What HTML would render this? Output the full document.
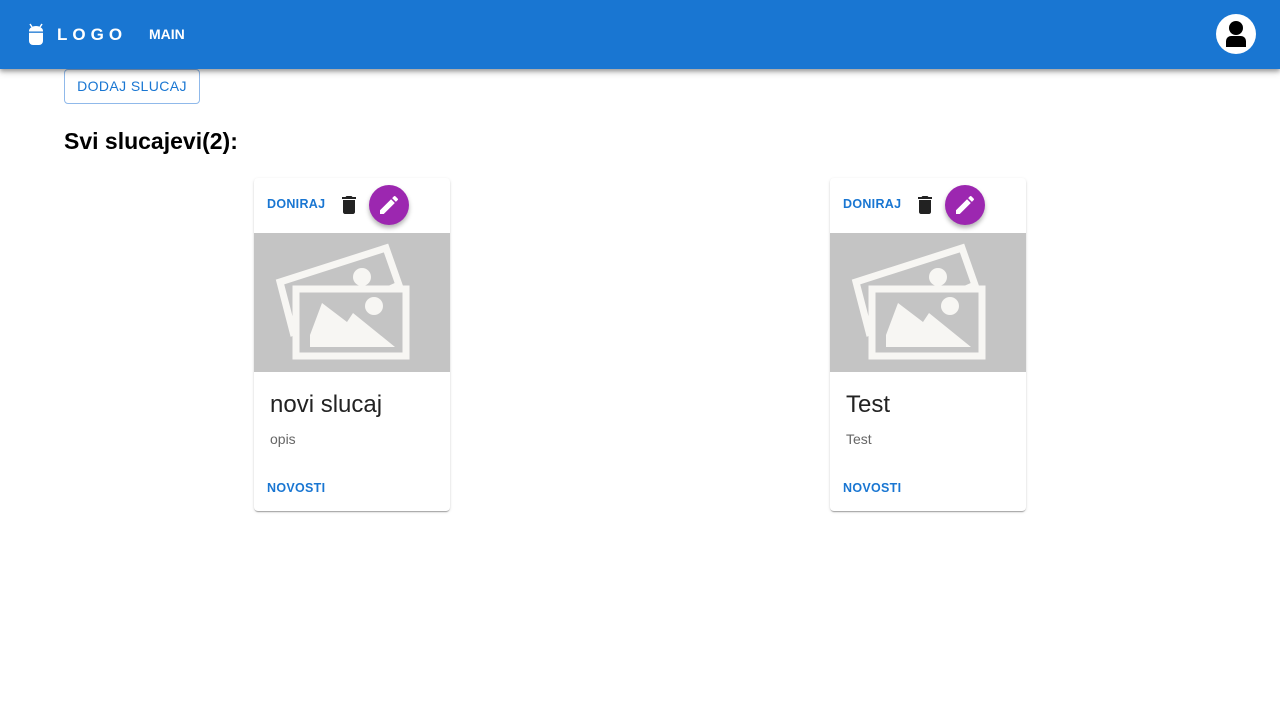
<!DOCTYPE html>
<html><head><style>
*{box-sizing:border-box;margin:0;padding:0}
body{width:1280px;height:720px;background:#fff;font-family:"Liberation Sans",sans-serif;position:relative;overflow:hidden}
.bar{position:absolute;left:0;top:0;width:1280px;height:69px;background:#1976d2;box-shadow:0 2px 4px rgba(0,0,0,.3),0 4px 6px rgba(0,0,0,.15);z-index:2}
.logo{position:absolute;left:57px;top:25px;color:#fff;font-weight:bold;font-size:17px;letter-spacing:5px}
.main{position:absolute;left:149px;top:26px;color:#fff;font-weight:bold;font-size:14px}
.av{position:absolute;left:1216px;top:14px;width:40px;height:40px;border-radius:50%;background:#fff}
.btn{position:absolute;left:64px;top:69px;width:136px;height:35px;border:1px solid #90b9ea;border-radius:4px;color:#1976d2;font-size:14px;text-align:center;line-height:33px;letter-spacing:.4px}
h2{position:absolute;left:64px;top:128px;font-size:23px;font-weight:bold;color:#000}
.card{position:absolute;top:178px;width:196px;height:333px;background:#fff;border-radius:4px;box-shadow:0 2px 1px -1px rgba(0,0,0,.2),0 1px 1px rgba(0,0,0,.14),0 1px 3px rgba(0,0,0,.12)}
.don{position:absolute;left:13px;top:19px;color:#1976d2;font-size:12.5px;font-weight:bold;letter-spacing:.3px}
.fab{position:absolute;left:115px;top:7px;width:40px;height:40px;border-radius:50%;background:#9c27b0;box-shadow:0 3px 5px rgba(0,0,0,.3)}
.img{position:absolute;left:0;top:55px;width:196px;height:139px;background:#c4c4c4}
.t{position:absolute;left:16px;top:213px;font-size:24px;color:#222}
.d{position:absolute;left:16px;top:253px;font-size:14px;color:#666}
.nov{position:absolute;left:13px;top:303px;color:#1976d2;font-size:12.5px;font-weight:bold;letter-spacing:.3px}
</style></head><body>
<div class="bar">
<svg style="position:absolute;left:27px;top:23px" width="18" height="23" viewBox="0 0 18 23"><path d="M3 1l2 3M15 1l-2 3" stroke="#fff" stroke-width="1.5"/><path d="M2 8a7 5 0 0 1 14 0v10a4 4 0 0 1-4 4H6a4 4 0 0 1-4-4z" fill="#fff"/><rect x="2" y="8.5" width="14" height="1.3" fill="#1976d2"/></svg>
<div class="logo">LOGO</div><div class="main">MAIN</div>
<div class="av"><svg width="40" height="40" viewBox="0 0 40 40"><circle cx="20" cy="14" r="7" fill="#000"/><path d="M10 33v-6a5 5 0 0 1 5-5h10a5 5 0 0 1 5 5v6z" fill="#000"/></svg></div>
</div>
<div class="btn">DODAJ SLUCAJ</div>
<h2>Svi slucajevi(2):</h2>

<div class="card" style="left:254px">
<div class="don">DONIRAJ</div>
<svg style="position:absolute;left:83px;top:15px" width="24" height="24" viewBox="0 0 24 24"><path d="M6 19c0 1.1.9 2 2 2h8c1.1 0 2-.9 2-2V7H6v12zM19 4h-3.5l-1-1h-5l-1 1H5v2h14V4z" fill="#222"/></svg>
<div class="fab"><svg style="position:absolute;left:8px;top:8px" width="24" height="24" viewBox="0 0 24 24"><path d="M3 17.25V21h3.75L17.81 9.94l-3.75-3.75L3 17.25zM20.71 7.04a1 1 0 000-1.41l-2.34-2.34a1 1 0 00-1.41 0l-1.83 1.83 3.75 3.75 1.83-1.83z" fill="#fff"/></svg></div>
<div class="img"><svg width="196" height="139" viewBox="0 0 196 139">
<polygon points="26,49 132,15 145,52 39,99" fill="none" stroke="#f7f6f3" stroke-width="7"/>
<circle cx="108" cy="44" r="9" fill="#f7f6f3"/>
<rect x="42" y="56" width="110" height="67" fill="#c4c4c4" stroke="#f7f6f3" stroke-width="7"/>
<circle cx="120" cy="73" r="9" fill="#f7f6f3"/>
<polygon points="56,102 68,70 93,89 99,80 141,114 56,114" fill="#f7f6f3"/>
</svg></div>
<div class="t">novi slucaj</div><div class="d">opis</div><div class="nov">NOVOSTI</div>
</div>

<div class="card" style="left:830px">
<div class="don">DONIRAJ</div>
<svg style="position:absolute;left:83px;top:15px" width="24" height="24" viewBox="0 0 24 24"><path d="M6 19c0 1.1.9 2 2 2h8c1.1 0 2-.9 2-2V7H6v12zM19 4h-3.5l-1-1h-5l-1 1H5v2h14V4z" fill="#222"/></svg>
<div class="fab"><svg style="position:absolute;left:8px;top:8px" width="24" height="24" viewBox="0 0 24 24"><path d="M3 17.25V21h3.75L17.81 9.94l-3.75-3.75L3 17.25zM20.71 7.04a1 1 0 000-1.41l-2.34-2.34a1 1 0 00-1.41 0l-1.83 1.83 3.75 3.75 1.83-1.83z" fill="#fff"/></svg></div>
<div class="img"><svg width="196" height="139" viewBox="0 0 196 139">
<polygon points="26,49 132,15 145,52 39,99" fill="none" stroke="#f7f6f3" stroke-width="7"/>
<circle cx="108" cy="44" r="9" fill="#f7f6f3"/>
<rect x="42" y="56" width="110" height="67" fill="#c4c4c4" stroke="#f7f6f3" stroke-width="7"/>
<circle cx="120" cy="73" r="9" fill="#f7f6f3"/>
<polygon points="56,102 68,70 93,89 99,80 141,114 56,114" fill="#f7f6f3"/>
</svg></div>
<div class="t">Test</div><div class="d">Test</div><div class="nov">NOVOSTI</div>
</div>
</body></html>
